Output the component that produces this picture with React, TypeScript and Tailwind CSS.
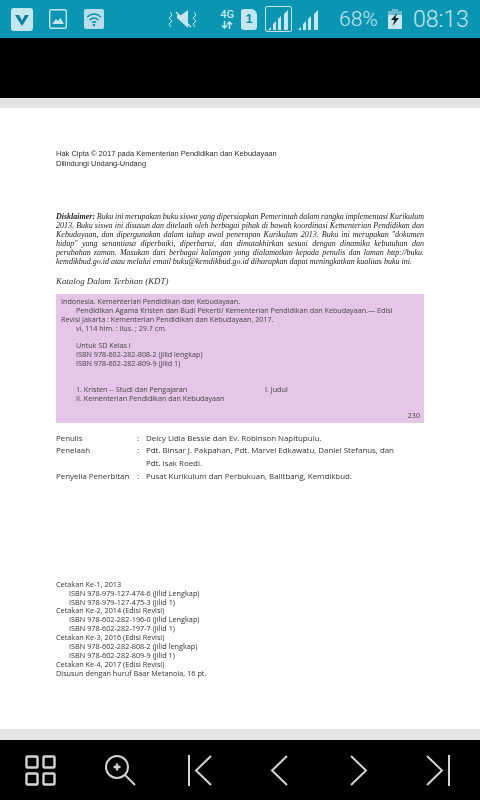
import type { ReactNode } from "react";

const tint = "#c4e6ef";

function StatusIcons() {
  return (
    <>
      <svg width="22" height="23" viewBox="0 0 22 23" className="ml-[11px]">
        <rect width="22" height="23" rx="3" fill={tint} />
        <path d="M4 7 L11 18 L18 7 H14 L11 12.5 L8 7 Z" fill="#0a7f9f" />
      </svg>
      <svg width="18" height="20" viewBox="0 0 18 20" className="ml-[16px]">
        <rect x="0.7" y="0.7" width="16.6" height="18.6" rx="1.5" fill="none" stroke={tint} strokeWidth="1.4" />
        <path d="M3 15 L7 10 L9 12 L11.5 9 L15 15 Z" fill={tint} />
      </svg>
      <svg width="20" height="20" viewBox="0 0 20 20" className="ml-[17px]">
        <rect width="20" height="20" rx="2" fill="#b5deea" />
        <g fill="none" stroke="#0b8fb0" strokeWidth="1.3">
          <path d="M3 8 Q10 2 17 8" />
          <path d="M5.5 11 Q10 7 14.5 11" />
          <path d="M8 13.5 Q10 12 12 13.5" />
        </g>
        <circle cx="10" cy="16" r="1.2" fill="#0b8fb0" />
      </svg>
      <svg width="29" height="20" viewBox="0 0 29 20" className="ml-[64px]">
        <path d="M9 6 H13 L20 1 V19 L9 9 Z" fill={tint} />
        <path d="M8 3 L23 18" stroke={tint} strokeWidth="1.5" />
        <g fill="none" stroke={tint} strokeWidth="1">
          <path d="M2 3 L4 6 L1 9 L4 12 L1 15 L3 18" />
          <path d="M26 3 L28 6 L25 9 L28 12 L25 15 L27 18" />
        </g>
      </svg>
      <div className="ml-[22px] flex w-[16px] flex-col items-center gap-[1px] font-['Roboto',sans-serif] text-[11px] leading-[11px] font-medium text-[#c4e6ef]">
        <span>4G</span>
        <svg width="12" height="8" viewBox="0 0 12 8" fill="none" stroke={tint} strokeWidth="1.6">
          <path d="M3.5 0 V7 M1 4.5 L3.5 7 L6 4.5" />
          <path d="M8.5 8 V1 M6 3.5 L8.5 1 L11 3.5" />
        </svg>
      </div>
      <div className="ml-[6px] flex h-[21px] w-[16px] items-center justify-center rounded-[3px] rounded-tr-[6px] bg-[#c4e6ef] text-[13px] font-bold text-[#0b8fb0]">
        1
      </div>
      <div className="ml-[8px] flex h-[26px] w-[27px] items-end justify-center rounded-[2px] border border-[#c4e6ef] pb-[1px]">
        <Signal />
      </div>
      <div className="ml-[6px] flex items-end">
        <Signal />
      </div>
      <span className="ml-[20px] w-[43px] font-['Roboto',sans-serif] text-[21px] leading-none font-light whitespace-nowrap text-[#c4e6ef]">68%</span>
      <svg width="14" height="20" viewBox="0 0 14 20" className="ml-[6px]">
        <rect x="4" y="0" width="6" height="2" fill="#6fb9cc" />
        <rect y="2" width="14" height="18" fill={tint} />
        <rect y="2" width="14" height="4" fill="#6fb9cc" />
        <path d="M9 4 L3 11 H6.5 L4.5 17 L11 9 H7.5 Z" fill="#10202a" />
      </svg>
      <span className="ml-[11px] font-['Roboto',sans-serif] text-[23px] leading-none font-light text-[#c4e6ef]">08:13</span>
    </>
  );
}

function Signal() {
  return (
    <svg width="21" height="21" viewBox="0 0 21 21">
      <path d="M0 21 L3 18 V21 Z M5 21 V15 L8 12 V21 Z M10 21 V10 L13 7 V21 Z M16 21 V5 L20 1 V21 Z" fill={tint} />
    </svg>
  );
}

function Credit({ label, children }: { label: string; children: ReactNode }) {
  return (
    <div className="flex">
      <span className="w-[81px] shrink-0">{label}</span>
      <span className="w-[9px] shrink-0">:</span>
      <span>{children}</span>
    </div>
  );
}

function Toolbar() {
  const stroke = "#d4d4d4";
  return (
    <div className="flex h-[60px] items-center bg-black">
      <svg width="31" height="31" viewBox="0 0 31 31" fill="none" stroke={stroke} strokeWidth="2.4" className="ml-[25px]">
        <rect x="1.5" y="1.5" width="11" height="11" rx="1" />
        <rect x="18.5" y="1.5" width="11" height="11" rx="1" />
        <rect x="1.5" y="18.5" width="11" height="11" rx="1" />
        <rect x="18.5" y="18.5" width="11" height="11" rx="1" />
      </svg>
      <svg width="31" height="31" viewBox="0 0 31 31" fill="none" stroke={stroke} strokeWidth="2" className="ml-[49px]">
        <circle cx="12" cy="12" r="11" />
        <path d="M20 20 L30 30" />
        <path d="M8.5 12 H15.5 M12 8.5 V15.5" strokeWidth="2.4" />
      </svg>
      <svg width="25" height="31" viewBox="0 0 25 31" fill="none" stroke={stroke} strokeWidth="2" className="ml-[51px]">
        <path d="M2 0 V31" />
        <path d="M24 1 L9 15.5 L24 30" />
      </svg>
      <svg width="18" height="31" viewBox="0 0 18 31" fill="none" stroke={stroke} strokeWidth="2" className="ml-[58px]">
        <path d="M17 1 L2 15.5 L17 30" />
      </svg>
      <svg width="18" height="31" viewBox="0 0 18 31" fill="none" stroke={stroke} strokeWidth="2" className="ml-[62px]">
        <path d="M1 1 L16 15.5 L1 30" />
      </svg>
      <svg width="25" height="31" viewBox="0 0 25 31" fill="none" stroke={stroke} strokeWidth="2" className="ml-[58px]">
        <path d="M1 1 L16 15.5 L1 30" />
        <path d="M23 0 V31" />
      </svg>
    </div>
  );
}

const disclaimer = [
  "2013. Buku siswa ini disusun dan ditelaah oleh berbagai pihak di bawah koordinasi Kementerian Pendidikan dan",
  "Kebudayaan, dan dipergunakan dalam tahap awal penerapan Kurikulum 2013. Buku ini merupakan \"dokumen",
  "hidup\" yang senantiasa diperbaiki, diperbarui, dan dimutakhirkan sesuai dengan dinamika kebutuhan dan",
  "perubahan zaman. Masukan dari berbagai kalangan yang dialamatkan kepada penulis dan laman http://buku.",
];

export default function App() {
  return (
    <div className="flex h-[800px] w-[480px] flex-col overflow-hidden bg-black font-['Liberation_Sans',sans-serif]">
      <div className="flex h-[38px] items-center bg-[#0a95b3]">
        <StatusIcons />
      </div>
      <div className="h-[60px] bg-black" />
      <div className="h-[10px] bg-[#e4e3e5]" />

      <div className="h-[621px] bg-white px-[56px] pt-[41px] text-[#2b2b2b] blur-[0.4px]">
        <div className="text-[7.5px] leading-[10px]">
          <p>Hak Cipta © 2017 pada Kementerian Pendidikan dan Kebudayaan</p>
          <p>Dilindungi Undang-Undang</p>
        </div>

        <div className="mt-[43px] font-['Liberation_Serif',serif] text-[8px] leading-[9.1px] text-[#222] italic">
          <p className="text-justify [word-spacing:-0.6px] [text-align-last:justify]">
            <b>Disklaimer: </b>Buku ini merupakan buku siswa yang dipersiapkan Pemerintah dalam rangka implementasi Kurikulum
          </p>
          {disclaimer.map((line, i) => (
            <p key={i} className="text-justify [text-align-last:justify]">
              {line}
            </p>
          ))}
          <p>kemdikbud.go.id atau melalui email buku@kemdikbud.go.id diharapkan dapat meningkatkan kualitas buku ini.</p>
        </div>

        <p className="mt-[8px] font-['Liberation_Serif',serif] text-[8.9px] leading-[12px] text-[#333] italic">
          Katalog Dalam Terbitan (KDT)
        </p>

        <div className="mt-[7px] h-[129px] bg-[#e6c6e7] pt-[3px] pl-[5px] font-['Open_Sans',sans-serif] text-[7.2px] leading-[9.1px] text-[#444]">
          <p>Indonesia. Kementerian Pendidikan dan Kebudayaan.</p>
          <p className="pl-[15px]">Pendidikan Agama Kristen dan Budi Pekerti/ Kementerian Pendidikan dan Kebudayaan.— Edisi</p>
          <p>Revisi Jakarta : Kementerian Pendidikan dan Kebudayaan, 2017.</p>
          <p className="pl-[15px]">vi, 114 hlm. : ilus. ; 29.7 cm.</p>
          <div className="mt-[8px] pl-[15px]">
            <p>Untuk SD Kelas I</p>
            <p>ISBN 978-602-282-808-2 (jilid lengkap)</p>
            <p>ISBN 978-602-282-809-9 (jilid 1)</p>
          </div>
          <div className="mt-[17px] pl-[15px]">
            <div className="flex">
              <span className="w-[189px]">1. Kristen -- Studi dan Pengajaran</span>
              <span>I. Judul</span>
            </div>
            <p>II. Kementerian Pendidikan dan Kebudayaan</p>
          </div>
          <p className="mt-[8px] pr-[4px] text-right">230</p>
        </div>

        <div className="mt-[9px] font-['Open_Sans',sans-serif] text-[7.9px] leading-[12.8px] text-[#333]">
          <Credit label="Penulis">Deicy Lidia Bessie dan Ev. Robinson Napitupulu.</Credit>
          <Credit label="Penelaah">
            Pdt. Binsar J. Pakpahan, Pdt. Marvel Edkawatu, Daniel Stefanus, dan
            <br />
            Pdt. Isak Roedi.
          </Credit>
          <Credit label="Penyelia Penerbitan">Pusat Kurikulum dan Perbukuan, Balitbang, Kemdikbud.</Credit>
        </div>

        <div className="mt-[97px] font-['Open_Sans',sans-serif] text-[7.3px] leading-[8.9px] text-[#333]">
          <p>Cetakan Ke-1, 2013</p>
          <p className="pl-[13px]">ISBN 978-979-127-474-6 (Jilid Lengkap)</p>
          <p className="pl-[13px]">ISBN 978-979-127-475-3 (Jilid 1)</p>
          <p>Cetakan Ke-2, 2014 (Edisi Revisi)</p>
          <p className="pl-[13px]">ISBN 978-602-282-196-0 (Jilid Lengkap)</p>
          <p className="pl-[13px]">ISBN 978-602-282-197-7 (Jilid 1)</p>
          <p>Cetakan Ke-3, 2016 (Edisi Revisi)</p>
          <p className="pl-[13px]">ISBN 978-602-282-808-2 (jilid lengkap)</p>
          <p className="pl-[13px]">ISBN 978-602-282-809-9 (jilid 1)</p>
          <p>Cetakan Ke-4, 2017 (Edisi Revisi)</p>
          <p>Disusun dengan huruf Baar Metanoia, 16 pt.</p>
        </div>
      </div>

      <div className="h-[11px] bg-[#e4e3e5]" />
      <Toolbar />
    </div>
  );
}
